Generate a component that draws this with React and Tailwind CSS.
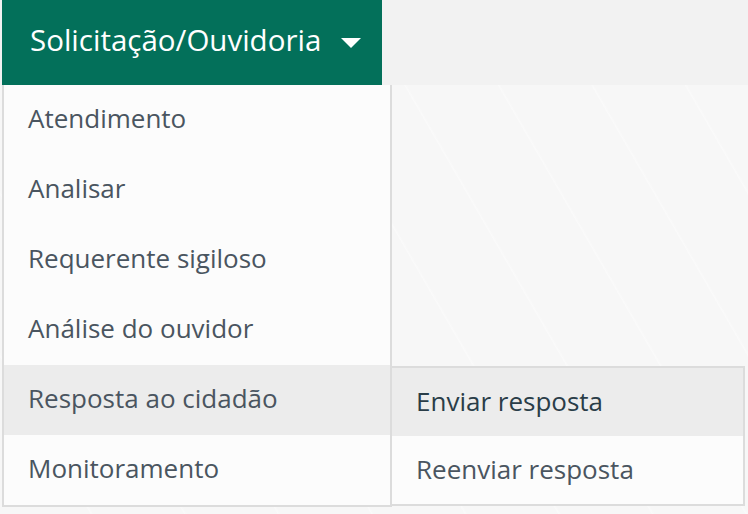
const items = [
  'Atendimento',
  'Analisar',
  'Requerente sigiloso',
  'Análise do ouvidor',
  'Resposta ao cidadão',
  'Monitoramento',
];

const subItems = ['Enviar resposta', 'Reenviar resposta'];

function Caret() {
  return (
    <svg width="20" height="10" viewBox="0 0 20 10" className="ml-5 mt-1">
      <path d="M0 0 L20 0 L10 10 Z" fill="#fff" />
    </svg>
  );
}

export default function App() {
  return (
    <div
      className="relative w-[748px] h-[514px] overflow-hidden bg-[#f7f7f7] bg-[repeating-linear-gradient(60deg,#f7f7f7_0px,#f7f7f7_78px,#fafafa_79px,#f7f7f7_81px)]"
      style={{ fontFamily: '"Open Sans", "Noto Sans", sans-serif' }}
    >
      {/* top bar */}
      <div className="h-[85px] bg-[#f2f2f2] flex">
        <button className="ml-[2px] w-[380px] h-full bg-[#03705a] flex items-center pl-[28px] pb-[4px] text-white text-[29.5px]">
          Solicitação/Ouvidoria
          <Caret />
        </button>
      </div>

      {/* dropdown */}
      <div className="absolute left-[2px] top-[85px] w-[390px] bg-[#fcfcfc] border-2 border-t-0 border-[#dcdcdc]">
        {items.map((item) => (
          <div
            key={item}
            className={`h-[70px] flex items-center pl-[24px] pb-[4px] text-[26px] text-[#4a5560] ${
              item === 'Resposta ao cidadão' ? 'bg-[#ececec]' : ''
            }`}
          >
            {item}
          </div>
        ))}
      </div>

      {/* submenu */}
      <div className="absolute left-[390px] top-[366px] w-[355px] bg-[#fcfcfc] border-2 border-[#dcdcdc]">
        {subItems.map((item, i) => (
          <div
            key={item}
            className={`h-[68px] flex items-center pl-[24px] pb-[2px] text-[26px] ${
              i === 0 ? 'bg-[#ececec] text-[#2a3d48]' : 'text-[#4a5560]'
            }`}
          >
            {item}
          </div>
        ))}
      </div>
    </div>
  );
}
